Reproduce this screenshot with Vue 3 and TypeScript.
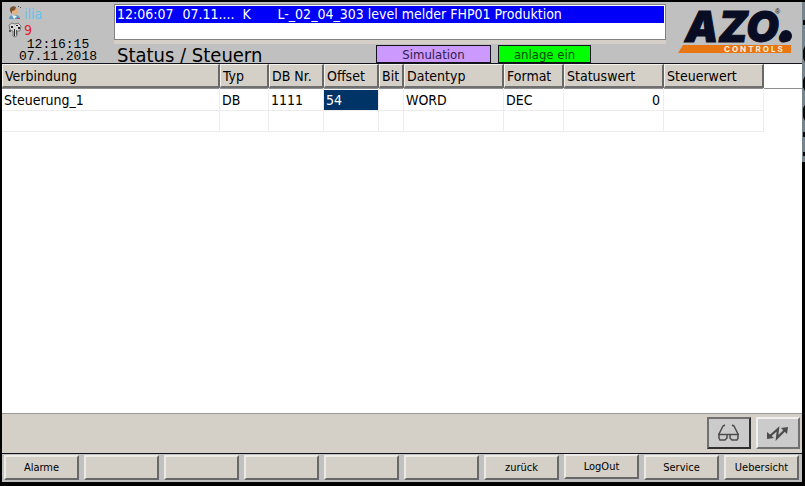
<script setup lang="ts">
interface Row {
  name: string
  typ: string
  db: string
  offset: string
  bit: string
  datatype: string
  format: string
  status: string
  control: string
}

const columns: string[] = ['Verbindung', 'Typ', 'DB Nr.', 'Offset', 'Bit', 'Datentyp', 'Format', 'Statuswert', 'Steuerwert']

const rows: Row[] = [
  { name: 'Steuerung_1', typ: 'DB', db: '1111', offset: '54', bit: '', datatype: 'WORD', format: 'DEC', status: '0', control: '' },
  { name: '', typ: '', db: '', offset: '', bit: '', datatype: '', format: '', status: '', control: '' },
]

const keys: string[] = ['Alarme', '', '', '', '', '', 'zurück', 'LogOut', 'Service', 'Uebersicht']
</script>

<template>
  <div class="screen">
    <main class="panel">
      <header class="top">
        <div class="session">
          <div class="who">
            <svg class="glyph" viewBox="0 0 14 16" aria-hidden="true">
              <path d="M1 13c0-3 2-4 4-4h3c2 0 4 1 4 4z" fill="#5c9cc8" />
              <path d="M4 9l2 4 3-3z" fill="#f5f5f5" />
              <path d="M4 4c0-3 6-3 6 1 0 3-1 4-3 4S4 7 4 4z" fill="#e5b27c" />
              <path d="M2 5c-1-4 3-6 6-4L7 4 4 5 4 8z" fill="#77502f" />
              <path d="M9 12h3v1H9z" fill="#c84b36" />
              <path d="M10 0h1v1h-1zM12 1h1v1h-1z" fill="#555" />
            </svg>
            <span class="user">ilia</span>
          </div>
          <div class="who">
            <svg class="glyph" viewBox="0 0 14 16" aria-hidden="true">
              <path d="M1 3l3-2 3 1 3-1 3 3-1 5-3 0v5l-2 1-2-1V9L2 8z" fill="#d9d9d9" stroke="#777" />
              <path d="M3 4h2v2H3zM8 3h2v1H8zM6 7h1v7H6zM10 5h2v2h-2z" fill="#222" />
              <path d="M1 8h2v2H1zM8 8h1v5H8z" fill="#555" />
            </svg>
            <span class="level">9</span>
          </div>
          <div class="clock">
            <time>12:16:15</time>
            <time>07.11.2018</time>
          </div>
        </div>

        <div class="middle">
          <div class="alarms">
            <table class="alarm-table">
              <colgroup><col class="a-time"><col class="a-date"><col class="a-kind"><col></colgroup>
              <tbody>
                <tr><td>12:06:07</td><td>07.11....</td><td>K</td><td>L-_02_04_303 level melder FHP01 Produktion</td></tr>
              </tbody>
            </table>
          </div>
          <div class="heading">
            <h1>Status / Steuern</h1>
            <span class="flag simulation">Simulation</span>
            <span class="flag running">anlage ein</span>
          </div>
        </div>

        <svg class="logo" viewBox="0 0 136 61" role="img" aria-label="AZO. Controls">
          <path d="M17 43H125V51H12z" fill="#e87613" />
          <text class="brand" x="19" y="40">AZO.</text>
          <circle cx="120" cy="34" r="6" fill="#080d24" />
          <text class="reg" x="109" y="12">®</text>
          <text class="division" x="58" y="50">CONTROLS</text>
        </svg>
      </header>

      <section class="grid-area">
        <table class="data">
          <colgroup>
            <col class="c-name"><col class="c-typ"><col class="c-db"><col class="c-db"><col class="c-bit">
            <col class="c-wide"><col class="c-format"><col class="c-wide"><col class="c-wide">
          </colgroup>
          <thead>
            <tr><th v-for="column in columns" :key="column" scope="col">{{ column }}</th></tr>
          </thead>
          <tbody>
            <tr v-for="(row, index) in rows" :key="index">
              <td>{{ row.name }}</td>
              <td>{{ row.typ }}</td>
              <td>{{ row.db }}</td>
              <td :class="{ selected: index === 0 }">{{ row.offset }}</td>
              <td>{{ row.bit }}</td>
              <td>{{ row.datatype }}</td>
              <td>{{ row.format }}</td>
              <td class="number">{{ row.status }}</td>
              <td>{{ row.control }}</td>
            </tr>
          </tbody>
        </table>
      </section>

      <div class="tools">
        <button type="button" class="tool pressed" aria-label="Beobachten" aria-pressed="true">
          <svg class="tool-icon" viewBox="0 0 24 20" aria-hidden="true">
            <path d="M8 2L6 3 2 11M15 2l2 1 4 8M1 11.5h21M2 11v4l1 2h5l2-2v-3M13 12v3l2 2h5l1-2v-4" fill="none" stroke="#4c4c4c" stroke-width="1.5" />
          </svg>
        </button>
        <button type="button" class="tool" aria-label="Steuern">
          <svg class="tool-icon" viewBox="0 0 24 20" aria-hidden="true">
            <path d="M4 13l8-7-1 9 8-8" fill="none" stroke="#4c4c4c" stroke-width="2.2" />
            <path d="M1 9v7l7-1zM22 4l-7 1 6 6z" fill="#4c4c4c" />
          </svg>
        </button>
      </div>

      <nav class="keys" aria-label="Funktionstasten">
        <button v-for="(label, index) in keys" :key="index" type="button" class="key" :class="{ raised: label === 'LogOut' }">{{ label }}</button>
      </nav>
    </main>
    <svg class="edge" viewBox="0 0 3 160" aria-hidden="true">
      <path d="M0 0h3v160H0z" fill="#76848e" />
      <path d="M1 18h2v5H1zM3 44l-2 4v8l2 4zM3 74l-2 4v7l2 4zM3 103l-2 3v9l2 4zM1 130h2v5H1zM1 150h2v4H1z" fill="#080808" />
    </svg>
  </div>
</template>

<style>
body {
  margin: 0;
  background: #000;
}
</style>

<style scoped>
.screen {
  box-sizing: border-box;
  display: flex;
  min-height: 100vh;
  padding: 2px 0 4px 2px;
  background: #000;
  color: #000;
  font-family: "DejaVu Sans Condensed", "DejaVu Sans", sans-serif;
  font-size: 14px;
}

.panel {
  display: flex;
  flex: 1;
  flex-direction: column;
  min-width: 0;
  background: #c0c0c0;
}

.edge {
  flex: none;
  width: 3px;
  height: 160px;
}

.top {
  display: flex;
  height: 61px;
  border-bottom: 1px solid #14141e;
}

.session {
  flex: none;
  width: 112px;
  padding-top: 4px;
  box-sizing: border-box;
}

.who {
  display: flex;
  align-items: center;
  gap: 2px;
  height: 16px;
  padding-left: 6px;
}

.glyph {
  width: 14px;
  height: 16px;
}

.user {
  color: #62c3ec;
}

.level {
  color: #e0202c;
}

.clock {
  display: flex;
  flex-direction: column;
  align-items: center;
  padding-top: 1px;
  font-family: "Liberation Mono", monospace;
  font-size: 13px;
  line-height: 12px;
}

.middle {
  display: flex;
  flex: 1;
  flex-direction: column;
  min-width: 0;
}

.alarms {
  box-sizing: border-box;
  height: 36px;
  margin-top: 2px;
  border: 1px solid #808080;
  background: #fff;
  box-shadow: 0 4px #d4d0c8;
}

.alarm-table {
  width: 100%;
  height: 18px;
  table-layout: fixed;
  border-collapse: collapse;
  background: #0000f8;
  color: #fff;
  line-height: 17px;
  border: 1px solid #fff;
}

.alarm-table td {
  padding: 0 1px;
  white-space: nowrap;
}

.a-time {
  width: 66px;
}

.a-date {
  width: 60px;
}

.a-kind {
  width: 35px;
}

.heading {
  display: flex;
  flex: 1;
  align-items: flex-end;
}

h1 {
  flex: 1;
  margin: 0;
  padding-left: 3px;
  font-size: 20px;
  font-weight: 400;
  line-height: 16px;
}

.flag {
  box-sizing: border-box;
  height: 18px;
  border: 1px solid #14141e;
  font-size: 13px;
  line-height: 17px;
  text-align: center;
}

.simulation {
  width: 115px;
  margin-right: 7px;
  background: #cc99ff;
  color: #30204a;
}

.running {
  width: 93px;
  margin-right: 75px;
  background: #00ff00;
  color: #064a06;
}

.logo {
  flex: none;
  width: 136px;
  height: 61px;
}

.brand {
  fill: #080d24;
  stroke: #080d24;
  stroke-width: 1px;
  font-family: Inter, "Liberation Sans", sans-serif;
  font-size: 42px;
  font-style: italic;
  font-weight: 900;
}

.reg {
  fill: #080d24;
  font-family: "Liberation Sans", sans-serif;
  font-size: 7px;
}

.division {
  fill: #fff0dc;
  font-family: Inter, sans-serif;
  font-size: 8px;
  font-weight: 700;
  letter-spacing: 2px;
}

.grid-area {
  flex: 1;
  border-bottom: 1px solid #989898;
  background: linear-gradient(#909090, #909090) 0 24px / 100% 1px no-repeat #fff;
}

.data {
  width: 762px;
  table-layout: fixed;
  border-collapse: separate;
  border-spacing: 0;
}

.c-name {
  width: 218px;
}

.c-typ {
  width: 49px;
}

.c-db {
  width: 55px;
}

.c-bit {
  width: 25px;
}

.c-wide {
  width: 100px;
}

.c-format {
  width: 60px;
}

th {
  box-sizing: border-box;
  height: 24px;
  padding: 0 2px;
  border: 1px solid;
  border-color: #f4f2ec #686868 #707070 #f4f2ec;
  border-right-width: 2px;
  border-bottom-width: 2px;
  background: #d4d0c8;
  font-weight: 400;
  text-align: left;
  white-space: nowrap;
}

.data td {
  box-sizing: border-box;
  height: 21px;
  padding: 0 3px 0 2px;
  border-right: 1px solid #ececec;
  border-bottom: 1px solid #ececec;
  line-height: 20px;
  white-space: nowrap;
}

.data tbody tr:first-child td {
  height: 23px;
  padding-top: 2px;
}

.data td.selected {
  background: linear-gradient(#003366, #003366) 0 2px no-repeat;
  color: #fff;
}

.data td.number {
  text-align: right;
}

.tools {
  display: flex;
  align-items: flex-start;
  justify-content: flex-end;
  gap: 5px;
  box-sizing: border-box;
  height: 40px;
  padding: 3px 2px 0;
  border-bottom: 1px solid #14141e;
  background: #d4d0c8;
}

.tool {
  display: flex;
  align-items: center;
  justify-content: center;
  box-sizing: border-box;
  width: 44px;
  height: 32px;
  padding: 0;
  border: 2px solid;
  border-color: #f0f0f0 #707070 #707070 #f0f0f0;
  background: #cbcbcb;
}

.tool.pressed {
  border-color: #707070 #303030 #303030 #707070;
}

.tool-icon {
  width: 24px;
  height: 20px;
}

.keys {
  display: grid;
  grid-template-columns: repeat(10, minmax(0, 1fr));
  align-items: start;
  gap: 5px;
  box-sizing: border-box;
  height: 28px;
  padding: 1px 3px 0 2px;
}

.key {
  box-sizing: border-box;
  height: 25px;
  padding: 0;
  border: 2px solid;
  border-color: #eceae4 #686868 #686868 #eceae4;
  background: #d4d0c8;
  color: #000;
  font: inherit;
  font-size: 11px;
}

.raised {
  margin-top: -1px;
}
</style>
